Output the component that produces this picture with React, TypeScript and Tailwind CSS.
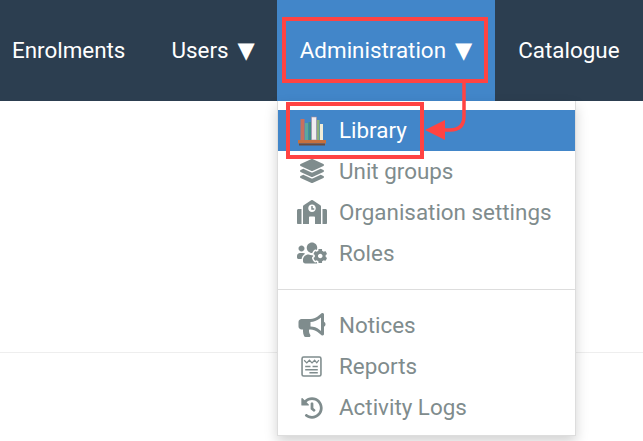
import { FaBullhorn, FaHistory, FaLayerGroup, FaSchool, FaUsersCog } from "react-icons/fa";

const navItems = [
  { label: "Enrolments", padding: "pr-[23px]" },
  { label: "Users", arrow: true, padding: "pl-[23px] pr-[22px]" },
  { label: "Administration", arrow: true, active: true, padding: "px-[23px]" },
  { label: "Catalogue", padding: "px-[23px]" },
];

function LibraryIcon() {
  return (
    <svg width="30" height="30" viewBox="0 0 30 30" className="mt-[1px] shrink-0">
      <rect x="3.5" y="3" width="4" height="21" fill="#c9705c" />
      <rect x="8" y="7" width="3" height="17" fill="#5aa8a0" />
      <rect x="11.5" y="6" width="2.5" height="18" fill="#3f8f86" />
      <rect x="14.5" y="1" width="5" height="23" fill="#f1eef0" stroke="#a58a9a" strokeWidth="0.6" />
      <rect x="20" y="4" width="2.5" height="20" fill="#8fb07a" />
      <rect x="23" y="8" width="3" height="16" fill="#f0ecd8" />
      <rect x="1" y="24" width="28" height="3.5" fill="#c8703c" />
      <rect x="2" y="27.5" width="26" height="2" fill="#6b4a3c" />
    </svg>
  );
}

function ReportsIcon() {
  return (
    <svg width="21" height="21" viewBox="0 0 20 20" fill="none" stroke="#7f8c8d" className="mr-[1px] shrink-0">
      <rect x="1" y="1" width="18" height="18" rx="1.5" strokeWidth="1.5" />
      <path d="M3 4l2.5 2.5L8 4l2.5 2.5L13 4l2 2.5L17 4" strokeWidth="1.2" />
      <path d="M4 10h5M11 10h5M4 13h12M8 16h8" strokeWidth="1.4" />
    </svg>
  );
}

function MenuRow({ icon, label, active }: { icon: React.ReactNode; label: string; active?: boolean }) {
  return (
    <div className={`flex h-[41px] items-center ${active ? "bg-[#4286c9] text-white" : "text-[#7f8c8d]"}`}>
      <div className="flex w-[61px] justify-center pl-[6px]">{icon}</div>
      <span>{label}</span>
    </div>
  );
}

export default function App() {
  const iconClass = "mb-[1px] h-[24px] w-[30px] text-[#7f8c8d]";

  return (
    <div className="relative h-[441px] w-[643px] overflow-hidden bg-white font-['Roboto',sans-serif] text-[22.4px]">
      {/* Top nav */}
      <nav className="flex h-[101px] items-stretch bg-[#2c3e50] pl-[12px] text-white">
        {navItems.map((item) => (
          <div
            key={item.label}
            className={`flex items-center whitespace-nowrap ${item.padding} ${item.active ? "bg-[#4286c9]" : ""}`}
          >
            {item.label}
            {item.arrow && <span className="ml-[9px] font-['DejaVu_Sans',sans-serif]">▼</span>}
          </div>
        ))}
      </nav>

      <div className="mt-[251px] border-t border-[#eeeeee]" />

      {/* Dropdown */}
      <div className="absolute left-[277px] top-[101px] h-[335px] w-[299px] border border-t-0 border-[#dddddd] bg-white pt-[9px] shadow-[0_6px_12px_rgba(0,0,0,0.175)]">
        <MenuRow active label="Library" icon={<LibraryIcon />} />
        <MenuRow label="Unit groups" icon={<FaLayerGroup className={iconClass} />} />
        <MenuRow label="Organisation settings" icon={<FaSchool className={iconClass} />} />
        <MenuRow label="Roles" icon={<FaUsersCog className={iconClass} />} />
        <div className="mb-[15px] mt-[15px] border-t border-[#dddddd]" />
        <MenuRow label="Notices" icon={<FaBullhorn className={iconClass} />} />
        <MenuRow label="Reports" icon={<ReportsIcon />} />
        <MenuRow label="Activity Logs" icon={<FaHistory className="h-[22px] w-[30px] text-[#7f8c8d]" />} />
      </div>

      {/* Annotation boxes and arrow */}
      <div className="absolute left-[282px] top-[17px] h-[66px] w-[206px] border-[4px] border-[#ff4343]" />
      <div className="absolute left-[286px] top-[102px] h-[57px] w-[138px] border-[4px] border-[#ff4343]" />
      <svg className="absolute left-0 top-0" width="643" height="441" fill="none">
        <path d="M464 79v37q0 14-14 14h-10" stroke="#ff4343" strokeWidth="3.5" />
        <path d="M425 130l20-10v20z" fill="#ff4343" />
      </svg>
    </div>
  );
}
